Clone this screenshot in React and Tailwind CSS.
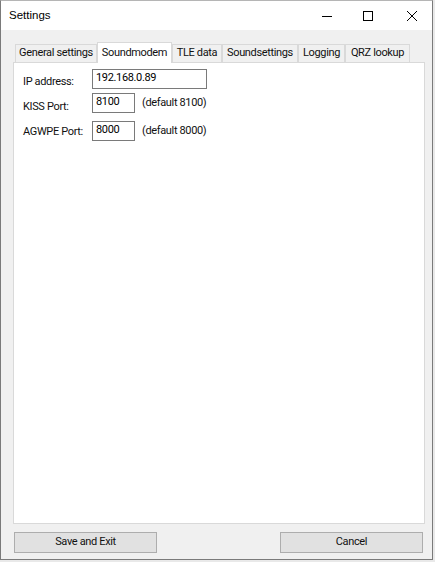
import React from 'react';

const tabs = [
  { name: 'General settings', w: 'w-[82px]' },
  { name: 'Soundmodem', w: 'w-[75px]', active: true },
  { name: 'TLE data', w: 'w-[50px]' },
  { name: 'Soundsettings', w: 'w-[76px]' },
  { name: 'Logging', w: 'w-[47px]' },
  { name: 'QRZ lookup', w: 'w-[65px]' },
];

const TitleButtons = () => (
  <div className="flex items-center mr-[15px]">
    {/* minimize */}
    <svg width="10" height="10" viewBox="0 0 10 10" className="block">
      <path d="M0 5.5H10" stroke="#000" strokeWidth="1" />
    </svg>
    {/* maximize */}
    <svg width="10" height="10" viewBox="0 0 10 10" className="block ml-[31px]">
      <rect x="0.5" y="0.5" width="9" height="9" fill="none" stroke="#000" strokeWidth="1" />
    </svg>
    {/* close */}
    <svg width="10" height="10" viewBox="0 0 10 10" className="block ml-[34px]">
      <path d="M0 0L10 10M10 0L0 10" stroke="#000" strokeWidth="1" />
    </svg>
  </div>
);

const Field = ({ value, w }) => (
  <div className={`${w} h-[20px] border border-[#7a7a7a] bg-white flex items-center pl-[3px] pb-[1px] text-black`}>
    {value}
  </div>
);

export default function App() {
  return (
    <div className="w-[435px] h-[562px] bg-[#e9e9e9] overflow-hidden">
      <div className="w-[433px] h-[560px] border border-[#7a7a7a] border-t-[#b5b5b5] bg-[#f0f0f0] flex flex-col text-black">
        {/* Title bar */}
        <div className="h-[29px] bg-white flex items-center justify-between font-['Liberation_Sans',sans-serif]">
          <span className="ml-[8px] text-[11.5px]">Settings</span>
          <TitleButtons />
        </div>

        {/* Client area */}
        <div className="flex-1 flex flex-col font-['Roboto',sans-serif] text-[11px] tracking-[-0.35px] text-[#111]">
          {/* Tab strip */}
          <div className="mt-[12px] ml-[14px] h-[20px] flex items-end">
            {tabs.map((t) => (
              <div
                key={t.name}
                className={`${t.w} flex items-center justify-center border border-b-0 border-[#d9d9d9] whitespace-nowrap ${
                  t.active ? 'h-[21px] -mb-px bg-white relative z-10' : 'h-[18px] bg-[#f0f0f0]'
                }`}
              >
                {t.name}
              </div>
            ))}
          </div>

          {/* Tab panel */}
          <div className="ml-[12px] w-[412px] h-[462px] border border-[#d9d9d9] bg-white flex flex-col pl-[9px] whitespace-nowrap">
            <div className="mt-[6px] flex items-start">
              <span className="w-[69px] pt-[6px] leading-[14px]">IP address:</span>
              <Field value="192.168.0.89" w="w-[115px]" />
            </div>
            <div className="mt-[4px] flex items-start">
              <span className="w-[69px] pt-[7px] leading-[14px]">KISS Port:</span>
              <Field value="8100" w="w-[43px]" />
              <span className="ml-[7px] pt-[3px] leading-[14px]">(default 8100)</span>
            </div>
            <div className="mt-[7px] flex items-start">
              <span className="w-[69px] pt-[4px] leading-[14px]">AGWPE Port:</span>
              <Field value="8000" w="w-[43px]" />
              <span className="ml-[7px] pt-[3px] leading-[14px]">(default 8000)</span>
            </div>
          </div>

          {/* Buttons */}
          <div className="mt-[8px] ml-[13px] mr-[9px] flex justify-between">
            <button className="w-[143px] h-[21px] bg-[#e1e1e1] border border-[#adadad] flex items-center justify-center">
              Save and Exit
            </button>
            <button className="w-[143px] h-[21px] bg-[#e1e1e1] border border-[#adadad] flex items-center justify-center">
              Cancel
            </button>
          </div>
        </div>
      </div>
    </div>
  );
}
